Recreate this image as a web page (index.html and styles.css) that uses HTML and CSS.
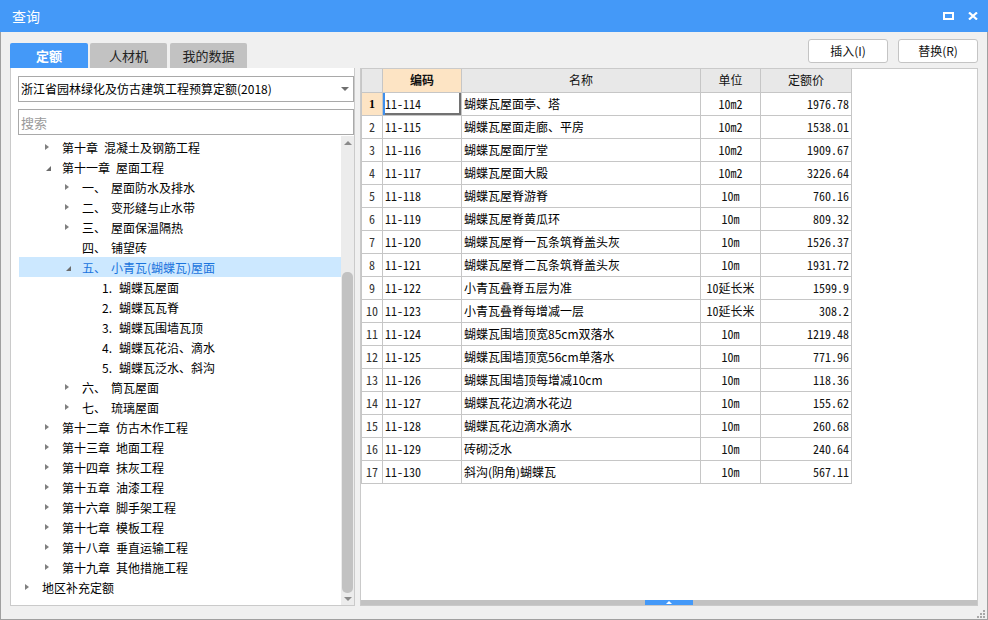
FILE: index.html
```html
<!DOCTYPE html>
<html lang="zh-CN">
<head>
<meta charset="utf-8">
<title>查询</title>
<link rel="stylesheet" href="styles.css">
</head>
<body>
<div class="window">
  <div class="titlebar">
    <span class="title">查询</span>
    <div class="tb-icons">
      <svg class="ico" width="11" height="8" viewBox="0 0 11 8"><rect x="1" y="1" width="9" height="6" fill="none" stroke="#fff" stroke-width="2"/></svg>
      <svg class="ico" width="10" height="8" viewBox="0 0 10 8"><path d="M1 0.5 L9 7.5 M9 0.5 L1 7.5" stroke="#fff" stroke-width="2.2" fill="none"/></svg>
    </div>
  </div>
  <div class="body">
    <div class="toprow">
      <div class="tabs">
        <div class="tab active">定额</div>
        <div class="tab">人材机</div>
        <div class="tab">我的数据</div>
      </div>
      <div class="buttons">
        <button class="btn">插入(I)</button>
        <button class="btn">替换(R)</button>
      </div>
    </div>
    <div class="panels">
      <div class="left">
        <div class="select"><span>浙江省园林绿化及仿古建筑工程预算定额(2018)</span><i class="caret"></i></div>
        <div class="search">搜索</div>
        <div class="treewrap">
          <div class="tree">
            <div class="row l1"><i class="arr r"></i><span class="ch">第十章</span><span>混凝土及钢筋工程</span></div>
            <div class="row l1"><i class="arr d"></i><span class="ch">第十一章</span><span>屋面工程</span></div>
            <div class="row l2"><i class="arr r"></i><span class="num2">一、</span><span>屋面防水及排水</span></div>
            <div class="row l2"><i class="arr r"></i><span class="num2">二、</span><span>变形缝与止水带</span></div>
            <div class="row l2"><i class="arr r"></i><span class="num2">三、</span><span>屋面保温隔热</span></div>
            <div class="row l2"><i class="arr"></i><span class="num2">四、</span><span>铺望砖</span></div>
            <div class="row l2 sel"><i class="arr d"></i><span class="num2">五、</span><span>小青瓦(蝴蝶瓦)屋面</span></div>
            <div class="row l3"><i class="arr"></i><span class="num3">1.</span><span>蝴蝶瓦屋面</span></div>
            <div class="row l3"><i class="arr"></i><span class="num3">2.</span><span>蝴蝶瓦瓦脊</span></div>
            <div class="row l3"><i class="arr"></i><span class="num3">3.</span><span>蝴蝶瓦围墙瓦顶</span></div>
            <div class="row l3"><i class="arr"></i><span class="num3">4.</span><span>蝴蝶瓦花沿、滴水</span></div>
            <div class="row l3"><i class="arr"></i><span class="num3">5.</span><span>蝴蝶瓦泛水、斜沟</span></div>
            <div class="row l2"><i class="arr r"></i><span class="num2">六、</span><span>筒瓦屋面</span></div>
            <div class="row l2"><i class="arr r"></i><span class="num2">七、</span><span>琉璃屋面</span></div>
            <div class="row l1"><i class="arr r"></i><span class="ch">第十二章</span><span>仿古木作工程</span></div>
            <div class="row l1"><i class="arr r"></i><span class="ch">第十三章</span><span>地面工程</span></div>
            <div class="row l1"><i class="arr r"></i><span class="ch">第十四章</span><span>抹灰工程</span></div>
            <div class="row l1"><i class="arr r"></i><span class="ch">第十五章</span><span>油漆工程</span></div>
            <div class="row l1"><i class="arr r"></i><span class="ch">第十六章</span><span>脚手架工程</span></div>
            <div class="row l1"><i class="arr r"></i><span class="ch">第十七章</span><span>模板工程</span></div>
            <div class="row l1"><i class="arr r"></i><span class="ch">第十八章</span><span>垂直运输工程</span></div>
            <div class="row l1"><i class="arr r"></i><span class="ch">第十九章</span><span>其他措施工程</span></div>
            <div class="row l0"><i class="arr r"></i><span>地区补充定额</span></div>
          </div>
          <div class="vscroll">
            <i class="up"></i>
            <div class="vtrack"><div class="vthumb"></div></div>
            <i class="down"></i>
          </div>
        </div>
      </div>
      <div class="right">
        <div class="gridarea">
          <table class="grid">
            <colgroup><col class="c0"><col class="c1"><col class="c2"><col class="c3"><col class="c4"></colgroup>
            <thead>
              <tr><th></th><th class="hl">编码</th><th>名称</th><th>单位</th><th>定额价</th></tr>
            </thead>
            <tbody>
              <tr><td class="rn cur">1</td><td class="code sel">11-114</td><td class="name">蝴蝶瓦屋面亭、塔</td><td class="unit">10m2</td><td class="price">1976.78</td></tr>
              <tr><td class="rn">2</td><td class="code">11-115</td><td class="name">蝴蝶瓦屋面走廊、平房</td><td class="unit">10m2</td><td class="price">1538.01</td></tr>
              <tr><td class="rn">3</td><td class="code">11-116</td><td class="name">蝴蝶瓦屋面厅堂</td><td class="unit">10m2</td><td class="price">1909.67</td></tr>
              <tr><td class="rn">4</td><td class="code">11-117</td><td class="name">蝴蝶瓦屋面大殿</td><td class="unit">10m2</td><td class="price">3226.64</td></tr>
              <tr><td class="rn">5</td><td class="code">11-118</td><td class="name">蝴蝶瓦屋脊游脊</td><td class="unit">10m</td><td class="price">760.16</td></tr>
              <tr><td class="rn">6</td><td class="code">11-119</td><td class="name">蝴蝶瓦屋脊黄瓜环</td><td class="unit">10m</td><td class="price">809.32</td></tr>
              <tr><td class="rn">7</td><td class="code">11-120</td><td class="name">蝴蝶瓦屋脊一瓦条筑脊盖头灰</td><td class="unit">10m</td><td class="price">1526.37</td></tr>
              <tr><td class="rn">8</td><td class="code">11-121</td><td class="name">蝴蝶瓦屋脊二瓦条筑脊盖头灰</td><td class="unit">10m</td><td class="price">1931.72</td></tr>
              <tr><td class="rn">9</td><td class="code">11-122</td><td class="name">小青瓦叠脊五层为准</td><td class="unit">10延长米</td><td class="price">1599.9</td></tr>
              <tr><td class="rn">10</td><td class="code">11-123</td><td class="name">小青瓦叠脊每增减一层</td><td class="unit">10延长米</td><td class="price">308.2</td></tr>
              <tr><td class="rn">11</td><td class="code">11-124</td><td class="name">蝴蝶瓦围墙顶宽85cm双落水</td><td class="unit">10m</td><td class="price">1219.48</td></tr>
              <tr><td class="rn">12</td><td class="code">11-125</td><td class="name">蝴蝶瓦围墙顶宽56cm单落水</td><td class="unit">10m</td><td class="price">771.96</td></tr>
              <tr><td class="rn">13</td><td class="code">11-126</td><td class="name">蝴蝶瓦围墙顶每增减10cm</td><td class="unit">10m</td><td class="price">118.36</td></tr>
              <tr><td class="rn">14</td><td class="code">11-127</td><td class="name">蝴蝶瓦花边滴水花边</td><td class="unit">10m</td><td class="price">155.62</td></tr>
              <tr><td class="rn">15</td><td class="code">11-128</td><td class="name">蝴蝶瓦花边滴水滴水</td><td class="unit">10m</td><td class="price">260.68</td></tr>
              <tr><td class="rn">16</td><td class="code">11-129</td><td class="name">砖砌泛水</td><td class="unit">10m</td><td class="price">240.64</td></tr>
              <tr><td class="rn">17</td><td class="code">11-130</td><td class="name">斜沟(阴角)蝴蝶瓦</td><td class="unit">10m</td><td class="price">567.11</td></tr>
            </tbody>
          </table>
        </div>
        <div class="hscroll"><div class="hthumb"><i></i></div></div>
      </div>
    </div>
    <div class="status"><div class="grip"><i></i><i></i><i></i><i></i><i></i><i></i></div></div>
  </div>
</div>
</body>
</html>
```
FILE: styles.css
```css
* { box-sizing: border-box; }
html, body { margin: 0; padding: 0; }
body {
  width: 988px; height: 620px; overflow: hidden;
  font-family: "Noto Sans CJK SC", "Liberation Sans", sans-serif;
  font-size: 12px; color: #000; background: #f0f0f0;
}
.window { width: 988px; height: 620px; display: flex; flex-direction: column; }
.titlebar {
  height: 32px; flex: none; background: #4499f8; color: #fff;
  display: flex; align-items: center; padding: 0 10px 0 12px; font-size: 14px;
}
.title { flex: 1; line-height: 16px; }
.tb-icons { display: flex; align-items: center; gap: 14px; margin-top: 0; }
.ico { display: block; }

.body {
  flex: 1; display: flex; flex-direction: column;
  border: 1px solid #a0a0a0; border-top: 0; padding: 0 9px;
}
.toprow { height: 36px; flex: none; display: flex; justify-content: space-between; }
.tabs { display: flex; align-self: flex-end; }
.tab {
  width: 77px; height: 25px; margin-right: 3px;
  background: #c2c2c2; color: #222; border-radius: 2px 2px 0 0;
  display: flex; align-items: center; justify-content: center; font-size: 13px;
}
.tab.active { width: 78px; margin-right: 2px; background: #4499f8; color: #fff; font-weight: bold; }
.buttons { display: flex; gap: 10px; padding-top: 7px; }
.btn {
  width: 80px; height: 24px; background: #fff; border: 1px solid #c4c4c4; border-radius: 3px;
  font-family: "Noto Sans CJK SC", "Liberation Sans", sans-serif; font-size: 12px; color: #111;
  padding: 0; line-height: 20px;
}

.panels { height: 538px; flex: none; display: flex; gap: 5px; }
.left {
  width: 345px; flex: none; background: #fff;
  border: 1px solid #cacaca; border-top: 0;
  display: flex; flex-direction: column; padding: 8px 0 0 7px;
}
.select {
  height: 26px; border: 1px solid #a9a9a9; display: flex; align-items: center;
  padding: 0 0 0 2px; justify-content: space-between;
}
.select span { line-height: 16px; }
.caret {
  width: 0; height: 0; margin-right: 4px;
  border-left: 4px solid transparent; border-right: 4px solid transparent; border-top: 4px solid #6f6f6f;
}
.search {
  height: 26px; margin-top: 7px; border: 1px solid #a9a9a9; color: #9a9a9a;
  display: flex; align-items: center; padding-left: 2px; font-size: 13px;
}
.treewrap { flex: 1; display: flex; margin-top: 1px; padding-left: 1px; }
.tree { flex: 1; padding-top: 1px; }
.row { height: 20px; display: flex; align-items: center; white-space: nowrap; line-height: 16px; padding-top: 1px; }
.row.l0 { padding-left: 6px; }
.row.l1 { padding-left: 26px; }
.row.l2 { padding-left: 46px; }
.row.l3 { padding-left: 66px; }
.row.sel { background: #cce8ff; color: #1a74dd; }
.arr { width: 17px; height: 19px; flex: none; position: relative; }
.arr.r::before {
  content: ""; position: absolute; left: 0; top: 6px;
  border-left: 4px solid #808080; border-top: 3.5px solid transparent; border-bottom: 3.5px solid transparent;
}
.arr.d::before {
  content: ""; position: absolute; left: 1px; top: 8px;
  border-left: 5px solid transparent; border-bottom: 5px solid #6c6c6c;
}
.ch { margin-right: 6px; }
.num2 { width: 29px; flex: none; }
.num3 { width: 17px; flex: none; }

.vscroll { width: 13px; flex: none; background: #ececec; display: flex; flex-direction: column; align-items: center; }
.vscroll .up, .vscroll .down { width: 0; height: 0; border-left: 4px solid transparent; border-right: 4px solid transparent; }
.vscroll .up { border-bottom: 4px solid #8a8a8a; margin-top: 5px; }
.vscroll .down { border-top: 4px solid #8a8a8a; margin-bottom: 4px; }
.vtrack { flex: 1; width: 100%; padding: 127px 1px 4px; }
.vthumb { width: 100%; height: 100%; background: #c2c2c2; border-radius: 5px; }

.right {
  flex: 1; background: #fff; border: 1px solid #cacaca;
  display: flex; flex-direction: column;
}
.gridarea { flex: 1; }
.grid { border-collapse: collapse; table-layout: fixed; width: 490px; }
.c0 { width: 21px; } .c1 { width: 79px; } .c2 { width: 239px; } .c3 { width: 60px; } .c4 { width: 91px; }
.grid th, .grid td {
  height: 23px; border: 1px solid #c6c6c6; padding: 0 3px; white-space: nowrap; overflow: hidden;
  line-height: 16px;
}
.grid th { background: #e8e8e8; font-weight: normal; font-size: 12px; color: #111; }
.grid tr:first-child th { border-top: 0; }
.grid th.hl { background: #fde4c4; font-weight: bold; }
.grid td { font-family: "Noto Sans Mono CJK SC", "Liberation Mono", "Noto Sans CJK SC", monospace; color: #111; }
.grid td.name { font-family: "Noto Sans CJK SC", "Liberation Sans", sans-serif; padding-left: 2px; color: #000; }
.grid td.rn { background: #fff; text-align: center; color: #333; padding: 0; }
.grid td.rn.cur { background: #fde4c4; color: #000; font-weight: bold; font-family: "Liberation Serif", serif; }
.grid td.code { padding-left: 2px; }
.grid td.sel { box-shadow: inset 2px 0 0 #3f8fec, inset -2px -2px 0 #727272; }
.grid td.unit { text-align: center; }
.grid td.price { text-align: right; padding-right: 2px; }

.hscroll { height: 5px; flex: none; background: #c2c2c2; display: flex; justify-content: center; }
.hthumb { width: 48px; height: 5px; background: #4499f8; display: flex; justify-content: center; align-items: center; }
.hthumb i { width: 0; height: 0; border-left: 3px solid transparent; border-right: 3px solid transparent; border-bottom: 3px solid #fff; }

.status { flex: 1; display: flex; justify-content: flex-end; align-items: flex-end; }
.grip { width: 8px; height: 8px; position: relative; margin: 0 -7px 1px 0; }
.grip i { position: absolute; width: 2px; height: 2px; background: #a8a8a8; }
.grip i:nth-child(1) { right: 0; top: 0; }
.grip i:nth-child(2) { right: 0; top: 3px; }
.grip i:nth-child(3) { right: 3px; top: 3px; }
.grip i:nth-child(4) { right: 0; top: 6px; }
.grip i:nth-child(5) { right: 3px; top: 6px; }
.grip i:nth-child(6) { right: 6px; top: 6px; }
```
